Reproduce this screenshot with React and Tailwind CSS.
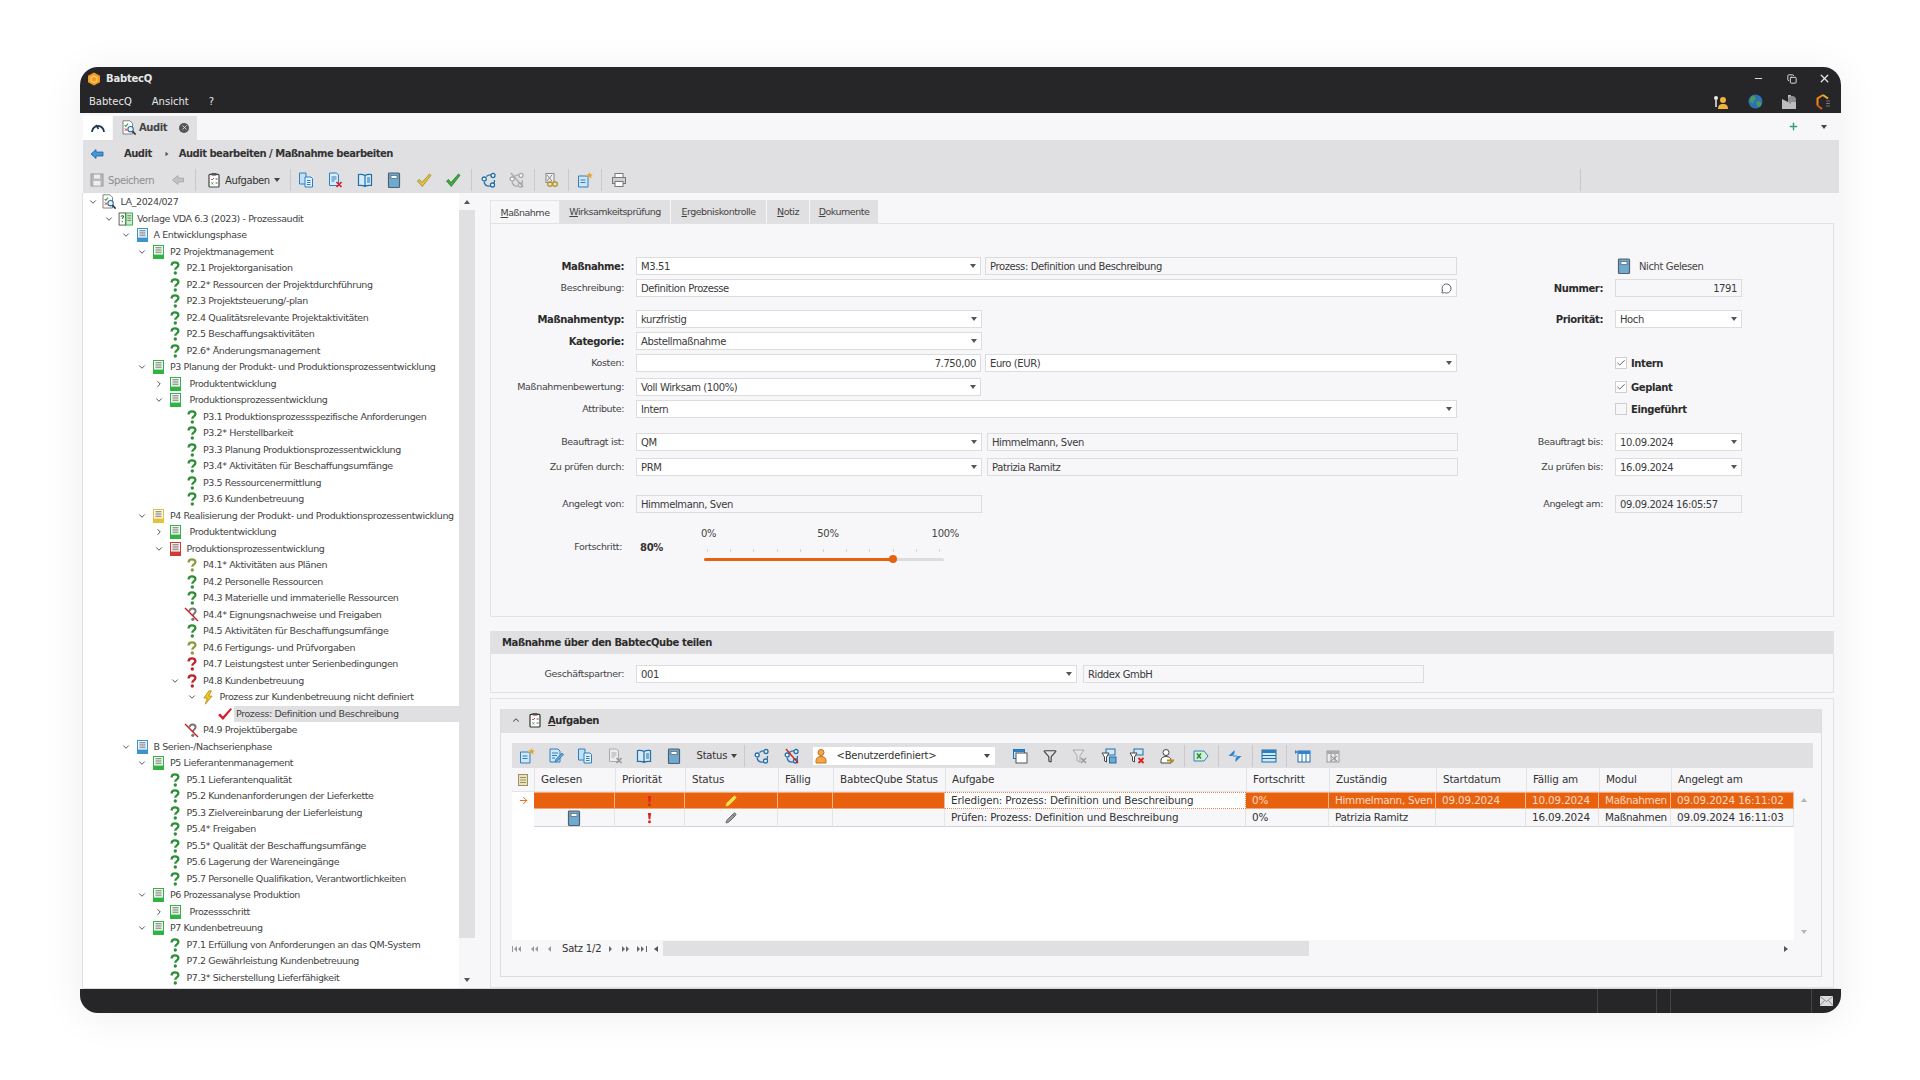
import { Plus, Minus, X, Copy, Funnel, MessageCircle, ChevronDown, ChevronRight, ChevronUp, ArrowRight, Pencil, Check } from 'lucide-react';

// tree data: depth, icon kind, chevron state, text
const TREE = [
  [0, 'audit', 'open', 'LA_2024/027'],
  [1, 'vorlage', 'open', 'Vorlage VDA 6.3 (2023) - Prozessaudit'],
  [2, 'blue', 'open', 'A Entwicklungsphase'],
  [3, 'green', 'open', 'P2 Projektmanagement'],
  [4, 'q', '', 'P2.1 Projektorganisation'],
  [4, 'q', '', 'P2.2* Ressourcen der Projektdurchführung'],
  [4, 'q', '', 'P2.3 Projektsteuerung/-plan'],
  [4, 'q', '', 'P2.4 Qualitätsrelevante Projektaktivitäten'],
  [4, 'q', '', 'P2.5 Beschaffungsaktivitäten'],
  [4, 'q', '', 'P2.6* Änderungsmanagement'],
  [3, 'green', 'open', 'P3 Planung der Produkt- und Produktionsprozessentwicklung'],
  [4, 'green', 'closed', 'Produktentwicklung'],
  [4, 'green', 'open', 'Produktionsprozessentwicklung'],
  [5, 'q', '', 'P3.1 Produktionsprozessspezifische Anforderungen'],
  [5, 'q', '', 'P3.2* Herstellbarkeit'],
  [5, 'q', '', 'P3.3 Planung Produktionsprozessentwicklung'],
  [5, 'q', '', 'P3.4* Aktivitäten für Beschaffungsumfänge'],
  [5, 'q', '', 'P3.5 Ressourcenermittlung'],
  [5, 'q', '', 'P3.6 Kundenbetreuung'],
  [3, 'yellow', 'open', 'P4 Realisierung der Produkt- und Produktionsprozessentwicklung'],
  [4, 'green', 'closed', 'Produktentwicklung'],
  [4, 'red', 'open', 'Produktionsprozessentwicklung'],
  [5, 'qo', '', 'P4.1* Aktivitäten aus Plänen'],
  [5, 'q', '', 'P4.2 Personelle Ressourcen'],
  [5, 'q', '', 'P4.3 Materielle und immaterielle Ressourcen'],
  [5, 'qx', '', 'P4.4* Eignungsnachweise und Freigaben'],
  [5, 'q', '', 'P4.5 Aktivitäten für Beschaffungsumfänge'],
  [5, 'qo', '', 'P4.6 Fertigungs- und Prüfvorgaben'],
  [5, 'qr', '', 'P4.7 Leistungstest unter Serienbedingungen'],
  [5, 'qr', 'open', 'P4.8 Kundenbetreuung'],
  [6, 'bolt', 'open', 'Prozess zur Kundenbetreuung nicht definiert'],
  [7, 'check', '', 'Prozess: Definition und Beschreibung'],
  [5, 'qx', '', 'P4.9 Projektübergabe'],
  [2, 'blue', 'open', 'B Serien-/Nachserienphase'],
  [3, 'green', 'open', 'P5 Lieferantenmanagement'],
  [4, 'q', '', 'P5.1 Lieferantenqualität'],
  [4, 'q', '', 'P5.2 Kundenanforderungen der Lieferkette'],
  [4, 'q', '', 'P5.3 Zielvereinbarung der Lieferleistung'],
  [4, 'q', '', 'P5.4* Freigaben'],
  [4, 'q', '', 'P5.5* Qualität der Beschaffungsumfänge'],
  [4, 'q', '', 'P5.6 Lagerung der Wareneingänge'],
  [4, 'q', '', 'P5.7 Personelle Qualifikation, Verantwortlichkeiten'],
  [3, 'green', 'open', 'P6 Prozessanalyse Produktion'],
  [4, 'green', 'closed', 'Prozessschritt'],
  [3, 'green', 'open', 'P7 Kundenbetreuung'],
  [4, 'q', '', 'P7.1 Erfüllung von Anforderungen an das QM-System'],
  [4, 'q', '', 'P7.2 Gewährleistung Kundenbetreuung'],
  [4, 'q', '', 'P7.3* Sicherstellung Lieferfähigkeit'],
];

const Caret = ({ dir = 'down', className = 'text-[#444]' }) => {
  const pts = { down: '1,2 7,2 4,6', up: '1,6 7,6 4,2', left: '6,1 6,7 2,4', right: '2,1 2,7 6,4' };
  return (
    <svg width="8" height="8" viewBox="0 0 8 8" className={`shrink-0 ${className}`}>
      <polygon points={pts[dir]} fill="currentColor" />
    </svg>
  );
};

const Sheet = ({ c = '#2fb344', d = '#cdeccd' }) => (
  <svg width="11" height="14" viewBox="0 0 11 14" className="shrink-0">
    <rect x=".5" y=".5" width="10" height="13" fill="#fff" stroke={c} />
    <rect x="1" y="9.500" width="9" height="3.500" fill={c} />
    <rect x="1.500" y="1.500" width="8" height="8" fill={d} opacity=".4" />
    <path d="M2.500 2.500h6M2.500 4.200h6M2.500 5.900h6M2.500 7.600h6" stroke="#8a8a8a" strokeWidth=".9" />
  </svg>
);

const Question = ({ c = '#2f8f36' }) => (
  <svg width="10" height="14" viewBox="0 0 10 14" className="shrink-0">
    <path d="M1.600 4.400C1.600 2.400 3.200 1.300 5 1.300s3.400 1 3.400 2.800c0 2.400-3.100 2.200-3.100 4.700" fill="none" stroke={c} strokeWidth="2.300" />
    <circle cx="5.300" cy="12" r="1.700" fill={c} />
  </svg>
);

const Struck = () => (
  <svg width="16" height="15" viewBox="0 0 16 15" className="shrink-0">
    <path d="M5.400 4.600C5.400 2.600 7 1.400 8.600 1.400s3 1 3 2.800c0 2.400-2.800 2.200-2.800 4.700" fill="none" stroke="#777" strokeWidth="2" />
    <circle cx="8.800" cy="12.300" r="1.600" fill="#777" />
    <path d="M1 1l13 13" stroke="#d01f1f" strokeWidth="1.400" />
  </svg>
);

const Bolt = () => (
  <svg width="12" height="15" viewBox="0 0 13 16" className="shrink-0">
    <path d="M7.500.8 2 8.600h3.600L3.600 15.200 11 6.400H7.200L10.200.8z" fill="#f2c81e" stroke="#a8840f" strokeWidth=".8" />
  </svg>
);

const RedCheck = () => (
  <svg width="16" height="14" viewBox="0 0 16 14" className="shrink-0">
    <path d="M1 8l2.200-1.400 2.600 3L13.600 1 15 2.200 6 13z" fill="#d21f2a" />
  </svg>
);

const Audit = ({ s = 16 }) => (
  <svg width={s} height={s} viewBox="0 0 16 16" className="shrink-0">
    <path d="M2 .8h7l2.500 2.500V14H2z" fill="#fff" stroke="#777" strokeWidth=".9" />
    <path d="m3.600 5 1.200 1.300L7 3.600" fill="none" stroke="#3aa43a" strokeWidth="1.100" />
    <path d="m3.800 8.400 2.400 2.400m0-2.400-2.400 2.400" stroke="#d33" strokeWidth="1" />
    <circle cx="9.600" cy="9.200" r="2.700" fill="#e8f2fb" stroke="#2f6f9f" strokeWidth="1.100" />
    <path d="m11.600 11.200 3 3.400" stroke="#333" strokeWidth="1.600" />
  </svg>
);

const Vorlage = () => (
  <svg width="16" height="14" viewBox="0 0 16 15" className="shrink-0">
    <rect x=".6" y="1" width="7" height="13" fill="#fff" stroke="#555" />
    <path d="M2.800 5c0-1.300 2.600-1.300 2.600 0 0 1.200-1.400 1.100-1.400 2.600M4 9.500v1.500" fill="none" stroke="#2a7f2a" strokeWidth="1.100" />
    <rect x="8" y="1" width="7" height="13" fill="#c8ecc8" stroke="#2fb344" />
    <path d="M9.500 4h4M9.500 6.500h4M9.500 9h4" stroke="#777" />
  </svg>
);

const TreeIcon = ({ kind }) => {
  switch (kind) {
    case 'audit': return <Audit />;
    case 'vorlage': return <Vorlage />;
    case 'blue': return <Sheet c="#3d93cf" d="#a9d5f2" />;
    case 'green': return <Sheet />;
    case 'yellow': return <Sheet c="#e3c23a" d="#f4e9a6" />;
    case 'red': return <Sheet c="#cf3b34" d="#e6b6b3" />;
    case 'q': return <Question />;
    case 'qo': return <Question c="#8e9a3f" />;
    case 'qr': return <Question c="#bf2228" />;
    case 'qx': return <Struck />;
    case 'bolt': return <Bolt />;
    case 'check': return <RedCheck />;
    default: return null;
  }
};

// generic toolbar drawings
const Ico = ({ children, w = 16, h = 16 }) => (
  <svg width={w} height={h} viewBox="0 0 16 16" fill="none" className="shrink-0">{children}</svg>
);
const SaveIcon = () => <Ico><rect x="2" y="2" width="12" height="12" fill="#b9b9bb" stroke="#9b9b9d" /><rect x="5" y="2.600" width="6" height="4" fill="#eee" /><rect x="4.500" y="9" width="7" height="4.600" fill="#eee" /></Ico>;
const BackIcon = () => <Ico><path d="M1.500 8 7 3.600v2.600h5.500v3.600H7v2.600z" fill="#c3c3c5" stroke="#aaa" /></Ico>;
const TaskIcon = ({ dark }) => <Ico><rect x="3" y="2.400" width="10" height="12.600" rx="1" fill="#fff" stroke={dark ? '#333' : '#444'} strokeWidth="1.200" /><rect x="5.600" y="1" width="4.800" height="2.600" fill="#555" /><path d="m5.200 7 1 1 1.800-2" stroke="#d33" /><path d="m5.400 10.400 2 2m0-2-2 2" stroke="#3a3" /><path d="M9.600 7h2M9.600 11h2" stroke="#555" /></Ico>;
const DocsIcon = () => <Ico><path d="M1.500 1h6.500v11H1.500z" fill="#bfe0f5" stroke="#2f7fc0" /><path d="M7 5h6l1.500 1.500V15H7z" fill="#e2f1fb" stroke="#2f7fc0" /><path d="M9 8.500h3.500M9 10.500h3.500M9 12.500h3.500" stroke="#2f7fc0" /></Ico>;
const DocDelIcon = ({ off }) => <Ico><path d="M2.500 1h7l2 2v10.500H2.500z" fill={off ? '#ececee' : '#d9ecf9'} stroke={off ? '#aaa' : '#2f7fc0'} /><path d="M4.500 5h5M4.500 7h5M4.500 9h3" stroke={off ? '#aaa' : '#2f7fc0'} /><path d="m9.500 10 5 5m0-5-5 5" stroke={off ? '#999' : '#d6201f'} strokeWidth="1.700" /></Ico>;
const BookIcon = () => <Ico><path d="M8 3.500C6.500 2.500 4 2.200 1.500 2.500v11c2.500-.3 5 0 6.500 1 1.500-1 4-1.300 6.500-1v-11C12 2.200 9.500 2.500 8 3.500zM8 3.500v11" fill="#d6eaf8" stroke="#1f6fa8" strokeWidth="1.200" /><path d="M10 6h3M10 8h3M10 10h3" stroke="#1f6fa8" /></Ico>;
const NoteIcon = () => <Ico><rect x="2.500" y="1" width="11" height="14.500" rx="1" fill="#6ea9cf" stroke="#50606e" strokeWidth="1.200" /><rect x="5" y="3.500" width="6" height="3" fill="#fff" stroke="#50606e" strokeWidth=".7" /></Ico>;
const TickIcon = ({ c, s }) => <Ico><path d="M1.500 9 3.500 7.500 6 10.500 13.500 2l1.500 1.300L6.300 14.500z" fill={c} stroke={s} strokeWidth=".7" /></Ico>;
const CycleIcon = ({ off, strike }) => {
  const c = off ? '#a9a9ab' : '#1f6fa8';
  return (
    <Ico>
      <path d="M5.500 4.500A5.500 5.500 0 0 1 10 3M13.500 8a5.500 5.500 0 0 1-1.500 4.500M9 14a5.500 5.500 0 0 1-6-4" stroke={c} strokeWidth="1.200" />
      <circle cx="12" cy="3.500" r="2" fill="#fff" stroke={c} strokeWidth="1.300" /><circle cx="3.200" cy="7" r="2" fill="#fff" stroke={c} strokeWidth="1.300" /><circle cx="11.500" cy="13" r="2" fill="#fff" stroke={c} strokeWidth="1.300" />
      {strike && <path d="m2 1 12 14" stroke={off ? '#a9a9ab' : '#d01f1f'} strokeWidth="1.300" />}
    </Ico>
  );
};
const ChainIcon = () => <Ico><rect x="2" y="1.500" width="8" height="9" fill="#eee" stroke="#888" /><path d="m3 3 5 6m0-6-5 6" stroke="#888" /><circle cx="6" cy="12" r="2.300" stroke="#b89a2a" strokeWidth="1.400" /><circle cx="11" cy="12" r="2.300" stroke="#b89a2a" strokeWidth="1.400" /></Ico>;
const DocStarIcon = () => <Ico><path d="M1.500 4h8l1.500 1.500V15H1.500z" fill="#cfe7f7" stroke="#2f7fc0" /><path d="M3.500 8h5M3.500 10.500h5" stroke="#2f7fc0" /><path d="m12.500 0 .9 2.300 2.400.2-1.800 1.500.6 2.400-2.100-1.300-2.100 1.300.6-2.400-1.800-1.500 2.400-.2z" fill="#e0a52a" /></Ico>;
const PrintIcon = () => <Ico><rect x="4" y="1.500" width="8" height="4" fill="#fff" stroke="#777" /><rect x="1.500" y="5.500" width="13" height="6" fill="#cfcfd1" stroke="#777" /><rect x="4" y="9.500" width="8" height="5" fill="#fff" stroke="#777" /></Ico>;
const EditIcon = () => <Ico><path d="M2 1h8l2 2v11H2z" fill="#cfe7f7" stroke="#2f7fc0" /><path d="M4 5h6M4 7.500h5M4 10h3" stroke="#2f7fc0" /><path d="m7 14 .8-2.600L14 5l1.600 1.600L9.300 13z" fill="#5ba5d8" stroke="#2f6f9f" strokeWidth=".7" /></Ico>;
const PersonIcon = ({ key2 }) => <Ico><circle cx="7" cy="4.500" r="3" fill={key2 ? '#fff' : '#f3a64a'} stroke={key2 ? '#444' : '#c8701a'} /><path d="M2 15v-2.500C2 10 4 8.500 7 8.500s5 1.500 5 4V15z" fill={key2 ? '#fff' : '#f3a64a'} stroke={key2 ? '#444' : '#c8701a'} />{key2 && <path d="M8 12.500h7M13 12.500v2" stroke="#b98a1a" strokeWidth="2" />}</Ico>;
const WindowsIcon = () => <Ico><rect x="1.500" y="1.500" width="11" height="9" fill="#cfe7f7" stroke="#1f6fa8" /><rect x="1.500" y="1.500" width="11" height="2.500" fill="#2f7fc0" /><rect x="4" y="5" width="11" height="10" fill="#fff" stroke="#555" /></Ico>;
const FilterDocIcon = ({ del }) => <Ico><rect x="5" y="1" width="9" height="6" fill="#cfe7f7" stroke="#1f6fa8" /><path d="M1 5h7L5.500 9v5L3.500 13V9z" fill="#fff" stroke="#444" />{del ? <path d="m9.500 10 5 5m0-5-5 5" stroke="#d6201f" strokeWidth="1.800" /> : <rect x="8.500" y="9" width="6.500" height="6" fill="#6ea9cf" stroke="#1f6fa8" />}</Ico>;
const ExcelIcon = () => <Ico><path d="M1 3h10l4 5-4 5H1z" fill="#d4efd4" stroke="#2f7fc0" /><path d="m4 5.500 4 5m0-5-4 5" stroke="#1f8a3a" strokeWidth="1.500" /></Ico>;
const SyncIcon = () => <Ico><path d="M1.500 8 7.500 2v3.500L5.500 8zM14.500 8l-6 6v-3.500L10.500 8z" fill="#2f86d0" /><path d="M6 8h4" stroke="#2f86d0" /></Ico>;
const ColumnsIcon = () => <Ico><rect x="1" y="2" width="14" height="12" fill="#cfe7f7" stroke="#1f6fa8" /><rect x="1" y="2" width="14" height="3" fill="#2f7fc0" /><path d="M1 7.500h14M1 10.500h14" stroke="#1f6fa8" /></Ico>;
const TableArrowIcon = ({ off }) => <Ico><rect x="3" y="3" width="12" height="11" fill={off ? '#ececee' : '#fff'} stroke={off ? '#999' : '#1f6fa8'} /><rect x="3" y="3" width="12" height="3" fill={off ? '#aaa' : '#2f86d0'} /><path d="M7 6v8M11 6v8" stroke={off ? '#999' : '#1f6fa8'} />{off ? <path d="m7 8 6 5m0-5-6 5" stroke="#888" /> : <path d="M0 2l3 2-3 2z" fill="#2f86d0" />}</Ico>;
const FilterOffIcon = () => <Ico><path d="M1 2h11L8 7.500V14L5 12.500v-5z" fill="#e4e4e6" stroke="#aaa" /><path d="m9 10 5 5m0-5-5 5" stroke="#999" strokeWidth="1.500" /></Ico>;

// pager buttons: triangles with an optional end bar
const Pager = ({ dir, n = 1, bar, className }) => {
  const tri = (x) => (dir === 'left' ? `${x + 3},0 ${x + 3},6 ${x},3` : `${x},0 ${x},6 ${x + 3},3`);
  const xs = n === 2 ? [3, 7] : [5];
  return (
    <svg width="14" height="6" viewBox="0 0 14 6" className={`shrink-0 ${className}`}>
      {xs.map((x) => <polygon key={x} points={tri(x)} fill="currentColor" />)}
      {bar && <rect x={dir === 'left' ? 1 : 12} width="1" height="6" fill="currentColor" />}
    </svg>
  );
};

const Logo = ({ s = 14 }) => (
  <svg width={s} height={s} viewBox="0 0 14 14" className="shrink-0">
    <path d="M7 .5 13 3.800v6.400L7 13.500 1 10.200V3.800z" fill="#f39a1f" />
    <path d="M7 4 10 5.700v3.200L7 10.600 4 8.900V5.700z" fill="none" stroke="#f7d27a" strokeWidth="1.200" />
  </svg>
);

const Sep = ({ className = '' }) => <div className={`w-px h-[22px] bg-[#c9c8ca] shrink-0 ${className}`} />;

const Slot = ({ children, className = 'w-[29.5px]' }) => (
  <div className={`flex items-center justify-center shrink-0 ${className}`}>{children}</div>
);

const Field = ({ className = '', children, caret, ro, right }) => (
  <div className={`h-[18px] shrink-0 border border-[#dcdbdd] flex items-center px-[4px] text-[10px] tracking-[-0.4px] text-[#3a3a3a] whitespace-nowrap ${ro ? 'bg-[#f7f6f8]' : 'bg-white'} ${right ? 'justify-end' : 'justify-between'} ${className}`}>
    {children}
    {caret && <Caret className="text-[#555] -mr-[1px]" />}
  </div>
);

const labelCls = (bold) => (bold
  ? 'text-[10px] tracking-[-0.4px] font-bold text-[#2b2b2b]'
  : 'text-[9.500px] tracking-[-0.35px] text-[#444]');

const Label = ({ children, bold }) => (
  <div className={`w-[133px] shrink-0 text-right mr-[12px] whitespace-nowrap ${labelCls(bold)}`}>{children}</div>
);

const RightLabel = ({ children, bold }) => (
  <div className={`w-[146px] shrink-0 text-right mr-[12px] whitespace-nowrap ${labelCls(bold)}`}>{children}</div>
);

const Tick = ({ on, children }) => (
  <div className="flex items-center ml-[158px]">
    <div className={`w-[12px] h-[12px] border border-[#cfced0] flex items-center justify-center ${on ? 'bg-white' : 'bg-[#f7f6f8]'}`}>
      {on && <Check size={10} strokeWidth={2} className="text-[#444]" />}
    </div>
    <span className="ml-[4px] text-[10px] tracking-[-0.4px] font-bold text-[#2b2b2b]">{children}</span>
  </div>
);

const FormRow = ({ className = '', children, right }) => (
  <div className={`flex items-center h-[18px] ${className}`}>
    <div className="w-[966px] shrink-0 flex items-center">{children}</div>
    {right}
  </div>
);

const GRID = 'grid grid-cols-[22px_81px_70px_93px_55px_112px_301px_83px_107px_90px_73px_72px_123px]';
const HEAD = ['Gelesen', 'Priorität', 'Status', 'Fällig', 'BabtecQube Status', 'Aufgabe', 'Fortschritt', 'Zuständig', 'Startdatum', 'Fällig am', 'Modul', 'Angelegt am'];

const TaskRow = ({ active, task, who, start, due, made, icon, pen }) => {
  const cell = active
    ? 'bg-[#e8610f] text-[#fcd9c2] border-r border-[#f6b78f] border-y border-y-[#f3a877]'
    : 'bg-[#f7f6f8] text-[#333] border-r border-[#e4e3e5] border-b border-b-[#d3d2d4]';
  const base = `${active ? 'h-[17px]' : 'h-[18px] pt-px'} flex items-center pl-[6px] whitespace-nowrap overflow-hidden`;
  return (
    <div className={GRID}>
      <div className="flex items-center justify-center bg-white">
        {active && <ArrowRight size={11} className="text-[#e8610f]" />}
      </div>
      <div className={`${base} ${cell} justify-center !pl-0`}>{icon}</div>
      <div className={`${base} ${cell} justify-center !pl-0`}>
        <svg width="5" height="12" viewBox="0 0 6 13"><path d="M1 .5h4L4 8H2z" fill="#d8281e" /><circle cx="3" cy="11" r="1.800" fill="#d8281e" /></svg>
      </div>
      <div className={`${base} ${cell} justify-center !pl-0`}>{pen}</div>
      <div className={`${base} ${cell}`} />
      <div className={`${base} ${cell}`} />
      <div className={`${base} border-r text-[#333] ${active ? 'bg-white border-y border-dotted border-[#e8884f]' : 'bg-[#f7f6f8] border-[#e4e3e5] border-b-[#d3d2d4] border-b'}`}>{task}</div>
      <div className={`${base} ${cell}`}>0%</div>
      <div className={`${base} ${cell} tracking-[-0.3px]`}>{who}</div>
      <div className={`${base} ${cell}`}>{start}</div>
      <div className={`${base} ${cell}`}>{due}</div>
      <div className={`${base} ${cell} tracking-[-0.3px]`}>Maßnahmen</div>
      <div className={`${base} ${cell}`}>{made}</div>
    </div>
  );
};

export default function App() {
  return (
    <div className="h-[1080px] w-[1920px] bg-white pl-[80px] pt-[67px] font-['DejaVu_Sans',sans-serif] overflow-hidden">
      <div className="w-[1761px] h-[946px] rounded-[18px] overflow-hidden flex flex-col bg-[#f7f6f8] shadow-[0_4px_40px_rgba(0,0,0,0.07)]">
        {/* title bar and menu */}
        <div className="h-[46px] bg-[#262527] shrink-0 text-[#e8e8e8] text-[10px]">
          <div className="h-[23px] flex items-center pl-[7px]">
            <Logo />
            <span className="ml-[5px] font-bold text-[10px] tracking-[-0.2px]">BabtecQ</span>
            <div className="ml-auto flex items-center">
              <Slot className="w-[33px]"><Minus size={11} /></Slot>
              <Slot className="w-[33px]"><Copy size={10} strokeWidth={2.200} /></Slot>
              <Slot className="w-[33px]"><X size={13} strokeWidth={2.400} /></Slot>
            </div>
          </div>
          <div className="h-[23px] flex items-center pl-[9px]">
            <span>BabtecQ</span>
            <span className="ml-[20px]">Ansicht</span>
            <span className="ml-[20px]">?</span>
            <div className="ml-auto flex items-center pr-[1px]">
              <Slot className="w-[34px]">
                <svg width="16" height="14" viewBox="0 0 16 14"><circle cx="3" cy="3" r="2" fill="#eee" /><path d="M3 5v7" stroke="#eee" strokeWidth="1.500" /><circle cx="10" cy="5" r="3" fill="#f3b23a" /><path d="M5 14c0-4 2-5 5-5s5 1 5 5z" fill="#f3b23a" /></svg>
              </Slot>
              <Slot className="w-[34px]">
                <svg width="15" height="15" viewBox="0 0 15 15"><circle cx="7.500" cy="7.500" r="7" fill="#2f6fb5" /><path d="M3.500 2c2.500-1 4 .5 4 2.500S5 6.500 5 8.500 3 9 1.500 6.500zM8.500 8c2-1 5-.5 5 1.500s-2 4-3 3.500-3-4-2-5z" fill="#4a9a5a" /></svg>
              </Slot>
              <Slot className="w-[34px]">
                <svg width="16" height="15" viewBox="0 0 16 15"><path d="M1 15V5l6 3V1h3v14z" fill="#bdbdbd" /><circle cx="11" cy="6" r="4" fill="#8f8f8f" /><path d="M10 15V8h5v7z" fill="#bdbdbd" /></svg>
              </Slot>
              <Slot className="w-[34px]">
                <svg width="15" height="16" viewBox="0 0 15 16"><path d="M7 1 1.500 4.500v7" fill="none" stroke="#f08a1d" strokeWidth="2" /><path d="M1.500 11.500 6 15" stroke="#e0561a" strokeWidth="2" /><path d="M7 1l5 3.500" stroke="#f4b23a" strokeWidth="2" /><path d="M10 7h4M10 9.500h4M10 12h4" stroke="#777" /></svg>
              </Slot>
            </div>
          </div>
        </div>

        {/* tab strip */}
        <div className="h-[27px] shrink-0 flex items-end pl-[3px] bg-[#f7f6f8]">
          <div className="w-[29px] h-[24px] bg-white flex items-center justify-center pb-[2px]">
            <svg width="16" height="13" viewBox="0 0 16 13"><path d="M2 11A6 6 0 0 1 14 11" fill="none" stroke="#1e3a52" strokeWidth="1.800" /><path d="m6 4 2.500 4" stroke="#1e3a52" strokeWidth="1.600" /></svg>
          </div>
          <div className="w-[84px] h-[24px] ml-px bg-[#e0dfe1] flex items-center pl-[8px] pb-px">
            <Audit />
            <span className="w-[30px] ml-[2px] text-[10px] tracking-[-0.4px] font-bold text-[#444]">Audit</span>
            <div className="ml-[10px] w-[10px] h-[10px] rounded-full bg-[#555] flex items-center justify-center">
              <X size={7} strokeWidth={3} className="text-[#e0dfe1]" />
            </div>
          </div>
          <div className="ml-auto h-[27px] flex items-center pr-[13px]">
            <Plus size={11} strokeWidth={3} className="text-[#3d9a7c]" />
            <div className="ml-[21px]"><Caret className="text-[#444]" /></div>
          </div>
        </div>

        {/* breadcrumb and toolbar */}
        <div className="h-[53px] shrink-0 bg-[#e0dfe1] ml-[3px] mr-[2px]">
          <div className="h-[27px] flex items-center pl-[7px] text-[10px] tracking-[-0.5px] font-bold text-[#333]">
            <svg width="14" height="12" viewBox="0 0 14 12"><path d="M1 6 6 1.500V4h7v4H6v2.500z" fill="#3f97dc" stroke="#1f5f9f" strokeWidth=".8" /></svg>
            <span className="ml-[20px]">Audit</span>
            <span className="ml-[12px] mr-[9px]"><Caret dir="right" className="text-[#555] !w-[6px] !h-[6px]" /></span>
            <span>Audit bearbeiten / Maßnahme bearbeiten</span>
          </div>
          <div className="h-[26px] flex items-center pl-[6px]">
            <SaveIcon />
            <span className="w-[49px] ml-[3px] text-[10px] tracking-[-0.4px] text-[#8d8d8f] whitespace-nowrap">Speichern</span>
            <div className="ml-[14px]"><BackIcon /></div>
            <Sep className="ml-[8px]" />
            <div className="ml-[10px]"><TaskIcon /></div>
            <span className="w-[48px] ml-[3px] text-[10px] tracking-[-0.4px] text-[#333] whitespace-nowrap">Aufgaben</span>
            <div><Caret /></div>
            <Sep className="ml-[9px]" />
            <div className="flex items-center">
              <Slot><DocsIcon /></Slot>
              <Slot><DocDelIcon /></Slot>
              <Slot><BookIcon /></Slot>
              <Slot><NoteIcon /></Slot>
              <Slot><TickIcon c="#e8c43a" s="#8a7a1a" /></Slot>
              <Slot><TickIcon c="#3fae3f" s="#1f6f1f" /></Slot>
            </div>
            <Sep className="ml-[3px]" />
            <Slot className="w-[33px]"><CycleIcon /></Slot>
            <Slot className="w-[24px]"><CycleIcon off strike /></Slot>
            <Sep className="ml-[5px]" />
            <Slot className="w-[33px]"><ChainIcon /></Slot>
            <Sep />
            <Slot className="w-[32px]"><DocStarIcon /></Slot>
            <Sep />
            <Slot className="w-[33px]"><PrintIcon /></Slot>
            <Sep className="ml-[945px]" />
          </div>
        </div>

        {/* main area */}
        <div className="flex-1 min-h-0 flex ml-[3px] mr-[2px] border-b border-[#d9d8da]">
          {/* tree */}
          <div className="w-[377px] shrink-0 bg-white overflow-hidden border-l border-[#e0dfe1] -ml-px pt-px">
            {TREE.map(([depth, kind, chev, text], i) => {
              const isSel = kind === 'check';
              return (
                <div key={i} className="h-[16.5px] flex items-center text-[9.500px] tracking-[-0.4px] text-[#444] whitespace-nowrap" style={{ paddingLeft: 3 + depth * 16.5 }}>
                  <div className="w-[13px] shrink-0 flex justify-center">
                    {chev === 'open' && <ChevronDown size={10} strokeWidth={2.400} className="text-[#555]" />}
                    {chev === 'closed' && <ChevronRight size={10} strokeWidth={2.400} className="text-[#555]" />}
                  </div>
                  <div className="w-[18px] shrink-0 ml-[1px] flex justify-center">
                    <TreeIcon kind={kind} />
                  </div>
                  <div className={`h-full flex-1 flex items-center pl-[2.500px] ${isSel ? 'bg-[#e0dfe1]' : ''} ${depth === 4 && kind === 'green' ? '!pl-[5.500px]' : ''}`}>
                    {text}
                  </div>
                </div>
              );
            })}
          </div>
          {/* tree scrollbar */}
          <div className="w-[16px] shrink-0 bg-[#f7f6f8] flex flex-col items-center">
            <div className="h-[17px] flex items-center"><Caret dir="up" className="text-[#555]" /></div>
            <div className="w-full h-[728px] bg-[#e0dfe1]" />
            <div className="flex-1 flex items-end pb-[4px]"><Caret className="text-[#555]" /></div>
          </div>

          {/* right side */}
          <div className="flex-1 min-w-0 flex flex-col pt-[7px] pl-[15px] pr-[5px]">
            {/* tabs */}
            <div className="h-[23px] shrink-0 flex items-stretch text-[9.500px] tracking-[-0.5px] text-[#444]">
              <div className="w-[70px] pt-[2px] bg-[#f7f6f8] border-t border-l border-r border-[#e4e3e5] flex items-center justify-center"><span><u>M</u>aßnahme</span></div>
              <div className="w-[110px] pt-[2px] bg-[#e0dfe1] flex items-center justify-center"><span><u>W</u>irksamkeitsprüfung</span></div>
              <div className="w-[95px] pt-[2px] ml-px bg-[#e0dfe1] flex items-center justify-center"><span><u>E</u>rgebniskontrolle</span></div>
              <div className="w-[42px] pt-[2px] ml-px bg-[#e0dfe1] flex items-center justify-center"><span><u>N</u>otiz</span></div>
              <div className="w-[68px] pt-[2px] ml-px bg-[#e0dfe1] flex items-center justify-center"><span><u>D</u>okumente</span></div>
            </div>

            {/* form panel */}
            <div className="h-[394px] shrink-0 border border-[#e2e1e3] pt-[33px] flex flex-col">
              <FormRow right={
                <div className="flex items-center ml-[159px]">
                  <NoteIcon />
                  <span className="ml-[7px] text-[10px] tracking-[-0.4px] text-[#444]">Nicht Gelesen</span>
                </div>
              }>
                <Label bold>Maßnahme:</Label>
                <Field caret className="w-[345px]">M3.51</Field>
                <Field ro className="w-[472px] ml-[4px]">Prozess: Definition und Beschreibung</Field>
              </FormRow>
              <FormRow className="mt-[4px]" right={<><RightLabel bold>Nummer:</RightLabel><Field ro right className="w-[127px]">1791</Field></>}>
                <Label>Beschreibung:</Label>
                <Field className="w-[821px]">
                  Definition Prozesse
                  <MessageCircle size={11} className="text-[#555]" />
                </Field>
              </FormRow>
              <FormRow className="mt-[13px]" right={<><RightLabel bold>Priorität:</RightLabel><Field caret className="w-[127px]">Hoch</Field></>}>
                <Label bold>Maßnahmentyp:</Label>
                <Field caret className="w-[346px]">kurzfristig</Field>
              </FormRow>
              <FormRow className="mt-[4px]">
                <Label bold>Kategorie:</Label>
                <Field caret className="w-[346px]">Abstellmaßnahme</Field>
              </FormRow>
              <FormRow className="mt-[4px]" right={<Tick on>Intern</Tick>}>
                <Label>Kosten:</Label>
                <Field right className="w-[345px]">7.750,00</Field>
                <Field caret className="w-[472px] ml-[4px]">Euro (EUR)</Field>
              </FormRow>
              <FormRow className="mt-[6px]" right={<Tick on>Geplant</Tick>}>
                <Label>Maßnahmenbewertung:</Label>
                <Field caret className="w-[345px]">Voll Wirksam (100%)</Field>
              </FormRow>
              <FormRow className="mt-[4px]" right={<Tick>Eingeführt</Tick>}>
                <Label>Attribute:</Label>
                <Field caret className="w-[821px]">Intern</Field>
              </FormRow>
              <FormRow className="mt-[15px]" right={<><RightLabel>Beauftragt bis:</RightLabel><Field caret className="w-[127px]">10.09.2024</Field></>}>
                <Label>Beauftragt ist:</Label>
                <Field caret className="w-[346px]">QM</Field>
                <Field ro className="w-[471px] ml-[5px]">Himmelmann, Sven</Field>
              </FormRow>
              <FormRow className="mt-[7px]" right={<><RightLabel>Zu prüfen bis:</RightLabel><Field caret className="w-[127px]">16.09.2024</Field></>}>
                <Label>Zu prüfen durch:</Label>
                <Field caret className="w-[346px]">PRM</Field>
                <Field ro className="w-[471px] ml-[5px]">Patrizia Ramitz</Field>
              </FormRow>
              <FormRow className="mt-[19px]" right={<><RightLabel>Angelegt am:</RightLabel><Field ro className="w-[127px]">09.09.2024 16:05:57</Field></>}>
                <Label>Angelegt von:</Label>
                <Field ro className="w-[346px]">Himmelmann, Sven</Field>
              </FormRow>

              {/* progress slider */}
              <div className="flex mt-[12px]">
                <div className="w-[131px] shrink-0 text-right text-[9.500px] tracking-[-0.35px] text-[#444] mt-[15px]">Fortschritt:</div>
                <div className="w-[62px] shrink-0 pl-[18px] text-[10px] tracking-[-0.3px] font-bold text-[#333] mt-[15px]">80%</div>
                <div className="w-[258px] shrink-0 ml-[17px]">
                  <div className="flex justify-between text-[10px] tracking-[-0.3px] text-[#444] h-[16px] items-center">
                    <span>0%</span><span className="ml-[8px]">50%</span><span>100%</span>
                  </div>
                  <div className="flex justify-between w-[233px] ml-[6px] mt-[8px]">
                    {[...Array(11)].map((_, i) => <div key={i} className="w-px h-[3px] bg-[#d5d4d6]" />)}
                  </div>
                  <div className="relative w-[240px] h-[3px] ml-[3px] mt-[5.500px] rounded-full bg-[#dcdbdd]">
                    <div className="h-full w-[189px] rounded-full bg-[#e8610f]" />
                    <div className="absolute left-[185px] -top-[2.500px] w-[8px] h-[8px] rounded-full bg-[#e8610f]" />
                  </div>
                </div>
              </div>
            </div>

            {/* share section */}
            <div className="mt-[14px] h-[62px] shrink-0 border border-[#e2e1e3] border-t-0">
              <div className="h-[23px] bg-[#e0dfe1] flex items-center pl-[11px] text-[10px] tracking-[-0.4px] font-bold text-[#2b2b2b]">Maßnahme über den BabtecQube teilen</div>
              <div className="flex items-center h-[18px] mt-[11px]">
                <Label>Geschäftspartner:</Label>
                <Field caret className="w-[441px]">001</Field>
                <Field ro className="w-[341px] ml-[6px]">Riddex GmbH</Field>
              </div>
            </div>

            {/* tasks section */}
            <div className="mt-[5px] flex-1 min-h-0 border border-[#e2e1e3] pt-[10px] pl-[9px] pr-[11px] pb-[10px]">
              <div className="h-full border border-[#dcdbdd] border-t-0 flex flex-col">
                <div className="h-[24px] shrink-0 bg-[#e0dfe1] flex items-center pl-[10px] pb-[2px] text-[10px] tracking-[-0.4px] font-bold text-[#2b2b2b]">
                  <ChevronUp size={10} strokeWidth={2.500} className="text-[#555]" />
                  <div className="ml-[6px]"><TaskIcon dark /></div>
                  <span className="ml-[5px]"><u>A</u>ufgaben</span>
                </div>
                <div className="pt-[10px] pl-[11px] pr-[8px] flex flex-col">
                  {/* grid toolbar */}
                  <div className="h-[25px] shrink-0 bg-[#e0dfe1] flex items-center">
                    <Slot className="w-[29px]"><DocStarIcon /></Slot>
                    <Slot><EditIcon /></Slot>
                    <Slot><DocsIcon /></Slot>
                    <Slot><DocDelIcon off /></Slot>
                    <Slot><BookIcon /></Slot>
                    <Slot><NoteIcon /></Slot>
                    <span className="w-[33px] ml-[8px] text-[10px] tracking-[-0.2px] text-[#333]">Status</span>
                    <Caret />
                    <Sep className="ml-[6px]" />
                    <Slot className="w-[34px]"><CycleIcon /></Slot>
                    <Slot className="w-[26px]"><CycleIcon strike /></Slot>
                    <div className="ml-[8px] w-[182px] h-[18px] shrink-0 bg-white flex items-center pl-[1px] pr-[4px] text-[10px] tracking-[-0.2px] text-[#333]">
                      <PersonIcon />
                      <span className="ml-[7px]">&lt;Benutzerdefiniert&gt;</span>
                      <div className="ml-auto"><Caret /></div>
                    </div>
                    <Slot className="w-[30px] ml-[10px]"><WindowsIcon /></Slot>
                    <Slot className="w-[30px]"><Funnel size={14} className="text-[#444]" /></Slot>
                    <Slot className="w-[30px]"><FilterOffIcon /></Slot>
                    <Slot className="w-[28px]"><FilterDocIcon /></Slot>
                    <Slot className="w-[29px]"><FilterDocIcon del /></Slot>
                    <Slot className="w-[30px]"><PersonIcon key2 /></Slot>
                    <Sep className="ml-[2px]" />
                    <Slot className="w-[33px]"><ExcelIcon /></Slot>
                    <Sep />
                    <Slot className="w-[33px]"><SyncIcon /></Slot>
                    <Sep />
                    <Slot className="w-[33px]"><ColumnsIcon /></Slot>
                    <Sep />
                    <Slot className="w-[33px]"><TableArrowIcon /></Slot>
                    <Slot className="w-[25px]"><TableArrowIcon off /></Slot>
                  </div>
                  {/* grid */}
                  <div className="flex h-[172px] shrink-0">
                    <div className="w-[1282px] shrink-0 flex flex-col bg-white text-[10.400px] tracking-[-0.15px]">
                      <div className={`${GRID} bg-[#f7f6f8] h-[24px] text-[#333] border-b border-[#e4e3e5]`}>
                        <div className="flex items-center justify-center">
                          <svg width="10" height="12" viewBox="0 0 10 12"><rect x=".5" y=".5" width="9" height="11" fill="#eee3b8" stroke="#9a8f6a" /><path d="M2 3.500h6M2 6h6M2 8.500h6" stroke="#9a8f6a" /></svg>
                        </div>
                        {HEAD.map((h) => (
                          <div key={h} className="flex items-center pl-[6px] border-l border-[#e4e3e5] whitespace-nowrap">{h}</div>
                        ))}
                      </div>
                      <TaskRow active task="Erledigen: Prozess: Definition und Beschreibung" who="Himmelmann, Sven" start="09.09.2024" due="10.09.2024" made="09.09.2024 16:11:02"
                        icon={null}
                        pen={<Pencil size={12} fill="#f2df4a" strokeWidth={1.500} className="text-[#f2df4a]" />} />
                      <TaskRow task="Prüfen: Prozess: Definition und Beschreibung" who="Patrizia Ramitz" start="" due="16.09.2024" made="09.09.2024 16:11:03"
                        icon={<NoteIcon />}
                        pen={<Pencil size={12} fill="#999" strokeWidth={1.500} className="text-[#555]" />} />
                    </div>
                    <div className="flex-1 flex flex-col items-center justify-between pt-[28px] pb-[4px]">
                      <Caret dir="up" className="text-[#b5b4b6]" />
                      <Caret className="text-[#b5b4b6]" />
                    </div>
                  </div>
                  {/* pager */}
                  <div className="h-[17px] shrink-0 flex items-center text-[10px] tracking-[-0.2px] text-[#333]">
                    <Slot className="w-[12px]"><Pager dir="left" n={2} bar className="text-[#999]" /></Slot>
                    <Slot className="w-[22px]"><Pager dir="left" n={2} className="text-[#999]" /></Slot>
                    <Slot className="w-[8px]"><Pager dir="left" className="text-[#999]" /></Slot>
                    <span className="w-[37px] ml-[8px] whitespace-nowrap">Satz 1/2</span>
                    <Slot className="w-[24px]"><Pager dir="right" className="text-[#666]" /></Slot>
                    <Slot className="w-[6px]"><Pager dir="right" n={2} className="text-[#666]" /></Slot>
                    <Slot className="w-[24px]"><Pager dir="right" n={2} bar className="text-[#666]" /></Slot>
                    <Slot className="w-[6px]"><Caret dir="left" className="text-[#555]" /></Slot>
                    <div className="ml-[4px] w-[646px] h-[15px] shrink-0 bg-[#e0dfe1]" />
                    <div className="ml-[473px]"><Caret dir="right" className="text-[#555]" /></div>
                  </div>
                </div>
              </div>
            </div>
          </div>
        </div>

        {/* status bar */}
        <div className="h-[24px] shrink-0 bg-[#262527] flex items-stretch">
          <div className="w-[1517px] shrink-0" />
          <div className="w-[59px] border-l border-[#444345]" />
          <div className="w-[14px] border-l border-[#444345]" />
          <div className="w-[141px] border-l border-[#444345]" />
          <div className="flex-1 border-l border-[#444345] flex items-center justify-center">
            <svg width="13" height="10" viewBox="0 0 13 10"><rect width="13" height="10" fill="#dcdcdc" /><path d="M0 .5 6.500 5.500 13 .5M0 9.500l4.500-5M13 9.500l-4.500-5" fill="none" stroke="#777" strokeWidth=".8" /></svg>
          </div>
        </div>
      </div>
    </div>
  );
}
